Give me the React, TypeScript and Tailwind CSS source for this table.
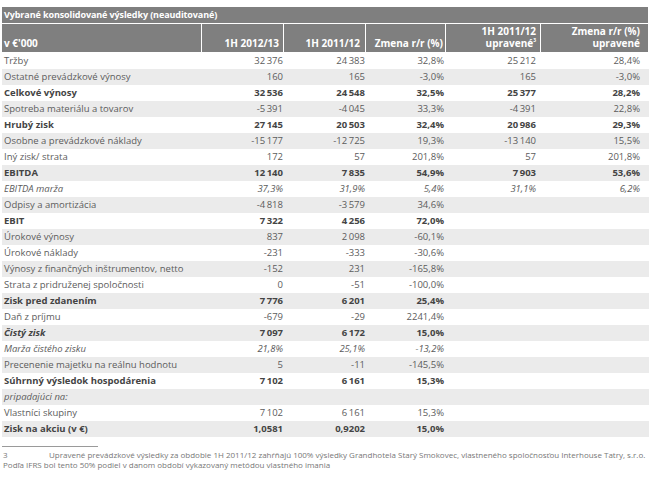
type Row = {
  label: string;
  values: string[];
  bold?: boolean;
  italic?: boolean;
  labelItalic?: boolean;
};

const rows: Row[] = [
  { label: 'Tržby', values: ['32\u2009376', '24\u2009383', '32,8%', '25\u2009212', '28,4%'] },
  { label: 'Ostatné prevádzkové výnosy', values: ['160', '165', '-3,0%', '165', '-3,0%'] },
  { label: 'Celkové výnosy', values: ['32\u2009536', '24\u2009548', '32,5%', '25\u2009377', '28,2%'], bold: true },
  { label: 'Spotreba materiálu a tovarov', values: ['-5\u2009391', '-4\u2009045', '33,3%', '-4\u2009391', '22,8%'] },
  { label: 'Hrubý zisk', values: ['27\u2009145', '20\u2009503', '32,4%', '20\u2009986', '29,3%'], bold: true },
  { label: 'Osobne a prevádzkové náklady', values: ['-15\u2009177', '-12\u2009725', '19,3%', '-13\u2009140', '15,5%'] },
  { label: 'Iný zisk/ strata', values: ['172', '57', '201,8%', '57', '201,8%'] },
  { label: 'EBITDA', values: ['12\u2009140', '7\u2009835', '54,9%', '7\u2009903', '53,6%'], bold: true },
  { label: 'EBITDA marža', values: ['37,3%', '31,9%', '5,4%', '31,1%', '6,2%'], italic: true },
  { label: 'Odpisy a amortizácia', values: ['-4\u2009818', '-3\u2009579', '34,6%', '', ''] },
  { label: 'EBIT', values: ['7\u2009322', '4\u2009256', '72,0%', '', ''], bold: true },
  { label: 'Úrokové výnosy', values: ['837', '2\u2009098', '-60,1%', '', ''] },
  { label: 'Úrokové náklady', values: ['-231', '-333', '-30,6%', '', ''] },
  { label: 'Výnosy z finančných inštrumentov, netto', values: ['-152', '231', '-165,8%', '', ''] },
  { label: 'Strata z pridruženej spoločnosti', values: ['0', '-51', '-100,0%', '', ''] },
  { label: 'Zisk pred zdanením', values: ['7\u2009776', '6\u2009201', '25,4%', '', ''], bold: true },
  { label: 'Daň z príjmu', values: ['-679', '-29', '2241,4%', '', ''] },
  { label: 'Čistý zisk', values: ['7\u2009097', '6\u2009172', '15,0%', '', ''], bold: true, labelItalic: true },
  { label: 'Marža čistého zisku', values: ['21,8%', '25,1%', '-13,2%', '', ''], italic: true },
  { label: 'Precenenie majetku na reálnu hodnotu', values: ['5', '-11', '-145,5%', '', ''] },
  { label: 'Súhrnný výsledok hospodárenia', values: ['7\u2009102', '6\u2009161', '15,3%', '', ''], bold: true },
  { label: 'pripadajúci na:', values: ['', '', '', '', ''], italic: true },
  { label: 'Vlastníci skupiny', values: ['7\u2009102', '6\u2009161', '15,3%', '', ''] },
  { label: 'Zisk na akciu (v €)', values: ['1,0581', '0,9202', '15,0%', '', ''], bold: true },
];

// right padding of each number column, data rows
const cellPad = ['pr-[1px]', 'pr-[1px]', 'pr-[2px]', 'pr-[5px]', 'pr-[8px]'];

const cols = 'grid grid-cols-[200px_82px_82px_80px_95px_107px]';

const App = () => {
  return (
    <div className="w-[649px] h-[482px] bg-white pt-[7px] pl-[2px] font-['Open_Sans',sans-serif] text-[9.5px] text-[#5c5c5c]">
      <div className="w-[646px] h-[16px] bg-[#7f7f7f] pl-[2px] text-white font-bold leading-[16px] text-[9px] tracking-[-0.1px]">
        Vybrané konsolidované výsledky (neauditované)
      </div>

      <div className={`${cols} h-[28px] mt-[1px] text-white font-bold text-[10px] leading-[12px]`}>
        <div className="bg-[#7f7f7f] border-r border-white flex items-end pl-[2px] pb-[3px]">v €'000</div>
        <div className="bg-[#7f7f7f] border-r border-white flex items-end justify-end pr-[4px] pb-[3px]">1H 2012/13</div>
        <div className="bg-[#7f7f7f] border-r border-white flex items-end justify-end pr-[5px] pb-[3px]">1H 2011/12</div>
        <div className="bg-[#7f7f7f] border-r border-white flex items-end justify-end pr-[2px] pb-[3px]">Zmena r/r (%)</div>
        <div className="bg-[#7f7f7f] border-r border-white flex flex-col items-end justify-end pr-[4px] pb-[3px] text-right">
          <span>1H 2011/12</span>
          <span className="flex items-start">
            upravené<span className="text-[5px] leading-[6px]">3</span>
          </span>
        </div>
        <div className="bg-[#7f7f7f] flex flex-col items-end justify-end pr-[8px] pb-[3px] text-right">
          <span>Zmena r/r (%)</span>
          <span>upravené</span>
        </div>
      </div>

      <div className="mt-[1px]">
        {rows.map((r, i) => (
          <div
            key={r.label}
            className={`${cols} h-[16px] leading-[16px] ${i % 2 === 1 ? 'bg-[#ebebeb]' : 'bg-white'} ${
              r.bold ? 'font-bold text-[#444444]' : ''
            }`}
          >
            <div className={`pl-[2px] whitespace-nowrap ${r.italic || r.labelItalic ? 'italic' : ''}`}>{r.label}</div>
            {r.values.map((v, j) => (
              <div key={j} className={`text-right whitespace-nowrap ${cellPad[j]} ${r.italic ? 'italic' : ''}`}>
                {v}
              </div>
            ))}
          </div>
        ))}
      </div>

      <div className="mt-[9px] w-[96px] border-t border-[#9a9a9a]" />
      <div className="mt-[3px] pl-[1px] text-[8px] leading-[10px] text-[#777777] whitespace-nowrap">
        <div>
          <span className="inline-block w-[46px]">3</span>
          Upravené prevádzkové výsledky za obdobie 1H 2011/12 zahŕňajú 100% výsledky Grandhotela Starý Smokovec, vlastneného spoločnosťou Interhouse Tatry, s.r.o.
        </div>
        <div>Podľa IFRS bol tento 50% podiel v danom období vykazovaný metódou vlastného imania</div>
      </div>
    </div>
  );
};

export default App;
